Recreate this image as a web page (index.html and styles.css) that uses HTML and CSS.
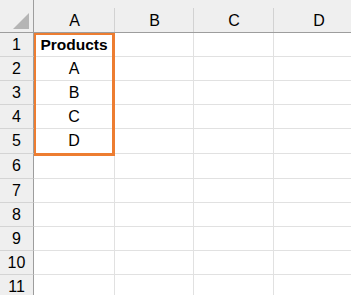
FILE: index.html
```html
<!DOCTYPE html>
<html lang="en">
<head>
  <meta charset="UTF-8">
  <title>Products</title>
  <link rel="stylesheet" href="styles.css">
</head>
<body>

<div class="sheet">
  <!-- column headers -->
  <div class="head corner">
    <svg width="16" height="16" viewBox="0 0 16 16"><polygon points="16,0 16,16 0,16" fill="#b5b5b5"/></svg>
  </div>
  <div class="head col">A</div>
  <div class="head col">B</div>
  <div class="head col">C</div>
  <div class="head col last">D</div>

  <div class="num">1</div><div class="cell bold">Products</div><div class="cell"></div><div class="cell"></div><div class="cell"></div>
  <div class="num">2</div><div class="cell">A</div><div class="cell"></div><div class="cell"></div><div class="cell"></div>
  <div class="num">3</div><div class="cell">B</div><div class="cell"></div><div class="cell"></div><div class="cell"></div>
  <div class="num">4</div><div class="cell">C</div><div class="cell"></div><div class="cell"></div><div class="cell"></div>
  <div class="num">5</div><div class="cell">D</div><div class="cell"></div><div class="cell"></div><div class="cell"></div>
  <div class="num">6</div><div class="cell"></div><div class="cell"></div><div class="cell"></div><div class="cell"></div>
  <div class="num">7</div><div class="cell"></div><div class="cell"></div><div class="cell"></div><div class="cell"></div>
  <div class="num">8</div><div class="cell"></div><div class="cell"></div><div class="cell"></div><div class="cell"></div>
  <div class="num">9</div><div class="cell"></div><div class="cell"></div><div class="cell"></div><div class="cell"></div>
  <div class="num">10</div><div class="cell"></div><div class="cell"></div><div class="cell"></div><div class="cell"></div>
  <div class="num">11</div><div class="cell"></div><div class="cell"></div><div class="cell"></div><div class="cell"></div>

  <!-- selected range A1:A5 -->
  <div class="selection"></div>
</div>

</body>
</html>
```

FILE: styles.css
```css
html, body {
  margin: 0;
  background: #fff;
  overflow: hidden;
}

.sheet {
  position: relative;
  display: grid;
  grid-template-columns: 34px 81px 79px 80px 90px;
  grid-template-rows: 33px 24px 24px 24px 24px 25px 25px 24px 24px 24px 24px 24px;
  font-family: "Liberation Sans", Arial, sans-serif;
  font-size: 16px;
  color: #000;
  border-top: 1px solid #e6e6e6;
  margin-top: -1px;
}

.head {
  box-sizing: border-box;
  background: linear-gradient(#d2d2d2, #d2d2d2) right bottom / 1px 24px no-repeat, #efefef;
  border-bottom: 1px solid #9d9d9d;
  display: flex;
  align-items: center;
  justify-content: center;
  padding-top: 9px;
}

.head.last {
  background: #efefef;
}

.corner {
  justify-content: flex-end;
  align-items: flex-end;
  padding: 0 4px 3px 0;
  background: #efefef;
  border-right: 1px solid #9d9d9d;
}

.corner svg {
  display: block;
}

.num {
  box-sizing: border-box;
  background: #efefef;
  border-right: 1px solid #9d9d9d;
  border-bottom: 1px solid #d4d4d4;
  display: flex;
  align-items: center;
  justify-content: center;
}

.cell {
  box-sizing: border-box;
  border-right: 1px solid #e1e1e1;
  border-bottom: 1px solid #e1e1e1;
  display: flex;
  align-items: center;
  justify-content: center;
}

.bold {
  font-weight: bold;
  font-size: 15.5px;
}

.selection {
  position: absolute;
  left: 34px;
  top: 33px;
  width: 81px;
  height: 123px;
  box-sizing: border-box;
  border: 2px solid #ed7d31;
  border-right-width: 3px;
  border-bottom-width: 3px;
}
```
